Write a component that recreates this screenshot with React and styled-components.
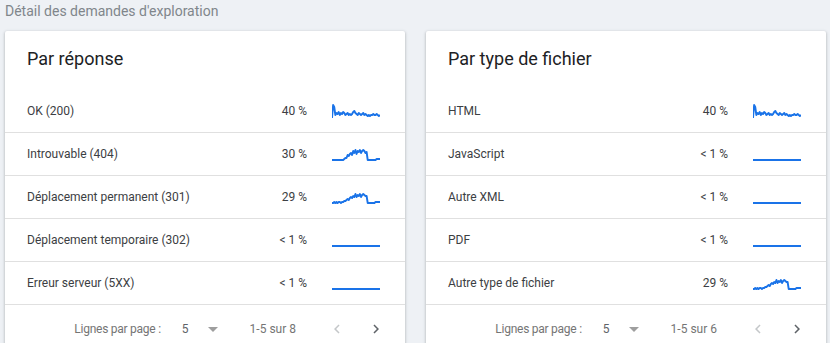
import styled, { createGlobalStyle } from "styled-components";

const GlobalStyle = createGlobalStyle`
  body {
    margin: 0;
    background: #eef1f5;
    font-family: Roboto, "Liberation Sans", sans-serif;
    overflow: hidden;
  }
`;

const Page = styled.div`
  padding: 1px 4px 0 5px;
`;

const Heading = styled.div`
  font-size: 14px;
  line-height: 20px;
  color: #80868b;
  margin-bottom: 10px;
`;

const Cards = styled.div`
  display: grid;
  grid-template-columns: 400px 400px;
  gap: 21px;
`;

const Card = styled.div`
  background: #fff;
  border-radius: 2px;
  box-shadow: 0 1px 2px rgba(60, 64, 67, 0.25), 0 1px 3px 1px rgba(60, 64, 67, 0.12);
  padding-top: 16px;
`;

const CardTitle = styled.div`
  font-size: 18px;
  line-height: 24px;
  color: #202124;
  padding: 0 22px;
  margin-bottom: 19px;
`;

const Row = styled.div`
  display: grid;
  grid-template-columns: 1fr 60px 48px;
  align-items: center;
  column-gap: 25px;
  height: 42px;
  padding: 0 25px 0 22px;
  border-bottom: 1px solid #e0e0e0;
  font-size: 12px;
  color: #3c4043;
`;

const Pct = styled.span`
  text-align: right;
`;

const Footer = styled.div`
  display: flex;
  align-items: center;
  justify-content: flex-end;
  height: 48px;
  padding-right: 20px;
  font-size: 12px;
  color: #757575;
`;

const Label = styled.span`
  margin-right: 21px;
  letter-spacing: -0.25px;
`;

const Select = styled.span`
  display: flex;
  align-items: center;
  gap: 19px;
  color: #5f6368;
  margin-right: 32px;
`;

const Range = styled.span`
  margin-right: 32px;
`;

const Nav = styled.span`
  display: flex;
  align-items: center;
  gap: 21px;
`;

const Caret = () => (
  <svg width="10" height="5" viewBox="0 0 10 5">
    <path d="M0 0h10L5 5z" fill="#9e9e9e" />
  </svg>
);

const Chevron = ({ dir, on }) => (
  <svg width="18" height="18" viewBox="0 0 24 24">
    <path
      d={dir === "left" ? "M15.4 7.4 14 6l-6 6 6 6 1.4-1.4L10.8 12z" : "M8.6 7.4 10 6l6 6-6 6-1.4-1.4 4.6-4.6z"}
      fill={on ? "#5f6368" : "#c4c7c9"}
    />
  </svg>
);

const shapes = {
  spiky: [15, 2, 4, 12, 10, 11, 9, 12, 10, 11, 9, 10, 12, 11, 10, 12, 11, 12, 11, 9, 8, 10, 11, 12, 10, 11, 12, 11, 10, 12, 11, 12, 13, 12, 13, 12, 12, 11, 12, 12, 11, 12, 13, 12],
  hump: [14, 14, 14, 14, 14, 14, 14, 14, 14, 14, 14, 13, 12, 12, 9, 10, 8, 7, 9, 5, 7, 4, 8, 5, 6, 4, 7, 5, 4, 5, 7, 6, 14, 14, 14, 14, 14, 14, 14, 14, 13, 13, 13, 13],
  hump2: [14, 14, 13, 14, 13, 14, 13, 13, 14, 13, 13, 12, 12, 11, 10, 11, 9, 8, 9, 7, 8, 5, 8, 6, 7, 5, 8, 6, 5, 6, 7, 7, 14, 14, 14, 14, 14, 14, 14, 13, 13, 13, 13, 13],
  flat: [14, 14],
};

const Spark = ({ shape }) => {
  const ys = shapes[shape];
  const pts = ys.map((y, i) => `${(i * 48) / (ys.length - 1)},${y}`).join(" ");
  return (
    <svg width="48" height="16" viewBox="0 0 48 16">
      <polyline points={pts} fill="none" stroke="#1a73e8" strokeWidth="1.9" strokeLinejoin="round" />
    </svg>
  );
};

const cards = [
  {
    title: "Par réponse",
    range: "1-5 sur 8",
    rows: [
      ["OK (200)", "40 %", "spiky"],
      ["Introuvable (404)", "30 %", "hump"],
      ["Déplacement permanent (301)", "29 %", "hump2"],
      ["Déplacement temporaire (302)", "< 1 %", "flat"],
      ["Erreur serveur (5XX)", "< 1 %", "flat"],
    ],
  },
  {
    title: "Par type de fichier",
    range: "1-5 sur 6",
    rows: [
      ["HTML", "40 %", "spiky"],
      ["JavaScript", "< 1 %", "flat"],
      ["Autre XML", "< 1 %", "flat"],
      ["PDF", "< 1 %", "flat"],
      ["Autre type de fichier", "29 %", "hump2"],
    ],
  },
];

export default function App() {
  return (
    <Page>
      <GlobalStyle />
      <Heading>Détail des demandes d'exploration</Heading>
      <Cards>
        {cards.map((c) => (
          <Card key={c.title}>
            <CardTitle>{c.title}</CardTitle>
            {c.rows.map(([name, pct, shape]) => (
              <Row key={name}>
                <span>{name}</span>
                <Pct>{pct}</Pct>
                <Spark shape={shape} />
              </Row>
            ))}
            <Footer>
              <Label>Lignes par page :</Label>
              <Select>
                5 <Caret />
              </Select>
              <Range>{c.range}</Range>
              <Nav>
                <Chevron dir="left" />
                <Chevron dir="right" on />
              </Nav>
            </Footer>
          </Card>
        ))}
      </Cards>
    </Page>
  );
}
